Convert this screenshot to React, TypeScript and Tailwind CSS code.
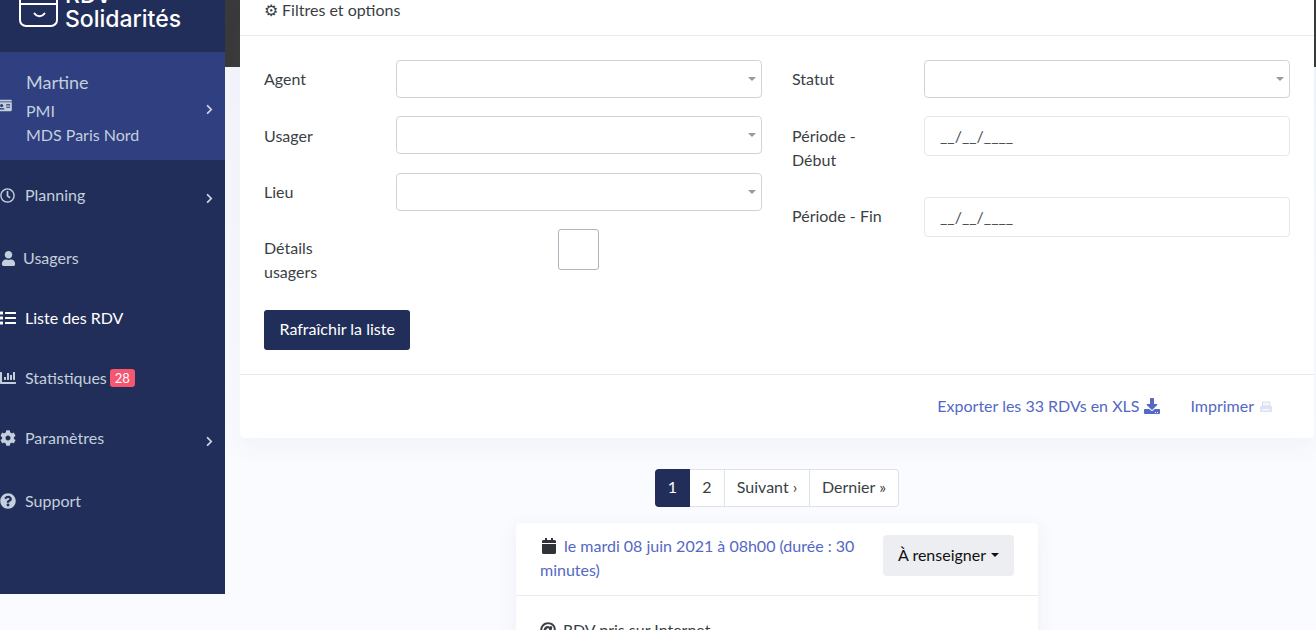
import { FaChartBar, FaChevronRight, FaCog, FaDownload, FaIdCard, FaList, FaQuestionCircle, FaRegClock, FaUser, FaCalendar, FaAt } from "react-icons/fa";
import type { ReactNode } from "react";

const lato = "font-['Lato','Liberation_Sans',sans-serif]";

function Chevron() {
  return <FaChevronRight className="h-[11px] w-[11px] translate-y-[3px] text-[#ced4e0]" aria-hidden="true" />;
}

function NavItem({ icon, label, active, chevron, badge, h, gap = "gap-[8px]" }: { icon: ReactNode; label: string; active?: boolean; chevron?: boolean; badge?: string; h: string; gap?: string }) {
  return (
    <div className={`flex items-center justify-between pr-[10px] ${h} ${active ? "text-white" : "text-[#c3d0dc]"}`}>
      <div className={`flex items-center ${gap} -ml-[2px] text-[16px]`}>
        <span className="flex w-[19px] justify-center">{icon}</span>
        <span>{label}</span>
        {badge && <span className="-ml-[5px] rounded-[3px] bg-[#f6566f] px-[5px] text-[13px] leading-[18px] text-white">{badge}</span>}
      </div>
      {chevron && <Chevron />}
    </div>
  );
}

function Sidebar() {
  return (
    <aside className="h-[594px] w-[225px] shrink-0 overflow-hidden bg-[#222e5a]">
      <div className="flex h-[52px] items-end pb-[25px] pl-[19px]">
        <div className="relative h-[28px] w-[39px] shrink-0 rounded-b-[7px] border-2 border-t-0 border-white">
          <div className="absolute left-0 right-0 top-[4px] h-[2px] bg-white" />
          <svg className="absolute left-[12px] top-[13px]" width="13" height="6" viewBox="0 0 13 6" fill="none" aria-hidden="true">
            <path d="M1.500 1.500 C4 5 9 5 11.500 1.500" stroke="white" strokeWidth="2" strokeLinecap="round" />
          </svg>
        </div>
        <div className="-mb-[4px] ml-[7px] font-['Inter','Lato',sans-serif] text-[23px] font-medium leading-[24px] text-white">
          <div className="-mt-[24px] h-[24px] pt-[4px] leading-[16px]">RDV</div>
          <div className="whitespace-nowrap">Solidarités</div>
        </div>
      </div>
      <div className="flex h-[108px] items-center justify-between bg-[#2f3f80] pr-[10px] text-[#c3d0dc]">
        <div className="-ml-[4px] flex h-full items-start gap-[13px]">
          <FaIdCard className="h-[13px] w-[17px] shrink-0 -translate-y-[1px] self-center" aria-hidden="true" />
          <div className="pt-[16px] text-[16px] leading-[24px]">
            <div className="mb-[3px] text-[18px] leading-[28px]">Martine</div>
            <div>PMI</div>
            <div>MDS Paris Nord</div>
          </div>
        </div>
        <Chevron />
      </div>
      <div className="pt-[5px]">
        <NavItem icon={<FaRegClock className="h-[15px] w-[15px]" />} label="Planning" chevron h="h-[60px]" />
        <NavItem icon={<FaUser className="h-[15px] w-[15px] translate-x-[1px]" />} label="Usagers" h="h-[66px]" gap="gap-[6px]" />
        <NavItem icon={<FaList className="h-[16px] w-[16px]" />} label="Liste des RDV" active h="h-[54px]" />
        <NavItem icon={<FaChartBar className="h-[16px] w-[16px]" />} label="Statistiques" badge="28" h="h-[66px]" />
        <NavItem icon={<FaCog className="h-[16px] w-[16px]" />} label="Paramètres" chevron h="h-[54px]" />
        <NavItem icon={<FaQuestionCircle className="h-[16px] w-[16px]" />} label="Support" h="h-[72px]" />
      </div>
    </aside>
  );
}

function SelectField({ label, mb = "mb-[19px]", labelPad = "pt-[7px]" }: { label: string; mb?: string; labelPad?: string }) {
  return (
    <div className={`flex items-start ${mb}`}>
      <label className={`w-[132px] shrink-0 ${labelPad} text-[16px] leading-[24px] text-[#3a3f45]`}>{label}</label>
      <div className="flex h-[38px] flex-1 items-center justify-end rounded-[4px] border border-[#ced4da] bg-white pr-[5px]">
        <span className="h-0 w-0 border-x-[4px] border-t-[4px] border-x-transparent border-t-[#999]" />
      </div>
    </div>
  );
}

function DateField({ label, mb, labelPad = "pt-[8px]" }: { label: ReactNode; mb: string; labelPad?: string }) {
  return (
    <div className={`flex items-start ${mb}`}>
      <label className={`w-[132px] shrink-0 ${labelPad} text-[16px] leading-[24px] text-[#3a3f45]`}>{label}</label>
      <div className="flex h-[40px] flex-1 items-center rounded-[4px] border border-[#e4e7eb] bg-white pl-[15px] text-[16px] text-[#495057]">__/__/____</div>
    </div>
  );
}

function Filters() {
  return (
    <section className="overflow-hidden rounded-b-[4px] bg-white shadow-[0_12px_24px_rgba(60,70,110,0.04)]">
      <div className="flex h-[36px] items-start border-b border-[#e9ecef] pl-[24px] text-[16px] leading-[20px] text-[#3a3f45]">⚙ Filtres et options</div>
      <div className="grid grid-cols-2 gap-x-[30px] px-[24px] pt-[24px]">
        <div>
          <SelectField label="Agent" mb="mb-[18px]" />
          <SelectField label="Usager" labelPad="pt-[8px]" />
          <SelectField label="Lieu" mb="mb-[18px]" />
          <div className="flex items-start">
            <label className="w-[132px] shrink-0 pt-[7px] text-[16px] leading-[24px] text-[#3a3f45]">Détails<br />usagers</label>
            <div className="ml-[162px] h-[41px] w-[41px] rounded-[3px] border border-[#adb5bd] bg-white" />
          </div>
        </div>
        <div>
          <SelectField label="Statut" mb="mb-[18px]" />
          <DateField label={<>Période -<br />Début</>} mb="mb-[41px]" />
          <div className="-mt-[16px]">
            <DateField label="Période - Fin" mb="mb-0" labelPad="pt-[7px]" />
          </div>
        </div>
      </div>
      <div className="px-[24px] pb-[24px] pt-[26px]">
        <button className="h-[40px] rounded-[3px] bg-[#222e5a] px-[15.500px] pb-[2px] text-[16px] text-white">Rafraîchir la liste</button>
      </div>
      <div className="flex h-[64px] items-center justify-end border-t border-[#e5eaf2] pr-[41px] text-[16px] text-[#5468c5]">
        <span className="-translate-y-[1px]">Exporter les 33 RDVs en XLS</span>
        <FaDownload className="ml-[5px] h-[16px] w-[16px] -translate-y-[1px]" aria-hidden="true" />
        <span className="ml-[30px] -translate-y-[1px]">Imprimer</span>
        <svg className="ml-[5px]" width="14" height="12" viewBox="0 0 14 12" aria-hidden="true">
          <path d="M3.500 1h7.500v4H3.500z" fill="#f3f5fb" stroke="#cfd5ee" strokeWidth="0.8" />
          <rect x="1" y="5" width="12" height="6" rx="1" fill="#dde1f2" />
          <rect x="3" y="8" width="8" height="1.500" fill="#f6f7fc" />
        </svg>
      </div>
    </section>
  );
}

function Pagination() {
  const cell = "flex h-[38px] items-center justify-center border border-l-0 border-[#dee2e6] bg-white pb-[2px] text-[16px] text-[#3a3f45]";
  return (
    <nav className="mt-[31px] flex justify-center">
      <span className="flex h-[38px] w-[35px] items-center justify-center rounded-l-[4px] bg-[#222e5a] pb-[2px] text-[16px] text-white">1</span>
      <span className={`${cell} w-[35px]`}>2</span>
      <span className={`${cell} w-[85px]`}>Suivant ›</span>
      <span className={`${cell} w-[89px] rounded-r-[4px]`}>Dernier »</span>
    </nav>
  );
}

function RdvCard() {
  return (
    <article className="mx-auto mt-[16px] w-[522px] rounded-[4px] bg-white pb-[20px] shadow-[0_4px_20px_rgba(60,70,110,0.06)]">
      <div className="flex h-[73px] items-start justify-between border-b border-[#e9ecef] pl-[24px] pr-[24px] pt-[11px]">
        <p className="w-[325px] text-[16px] leading-[24px] text-[#5468c5]">
          <FaCalendar className="mb-[3px] mr-[8px] ml-[2px] inline h-[16px] w-[14px] text-[#2f3237]" aria-hidden="true" />
          le mardi 08 juin 2021 à 08h00 (durée : 30 minutes)
        </p>
        <button className="mt-[1px] flex h-[41px] w-[131px] items-center justify-center rounded-[4px] bg-[#eceef2] pb-[2px] text-[16px] text-[#111]">
          À renseigner
          <span className="ml-[5px] h-0 w-0 border-x-[4px] border-t-[4px] border-x-transparent border-t-[#111]" />
        </button>
      </div>
      <p className="mt-[22px] flex items-center pl-[24px] text-[16px] leading-[24px] text-[#3a3f45]">
        <FaAt className="mr-[7px] h-[16px] w-[16px]" aria-hidden="true" />
        RDV pris sur Internet
      </p>
    </article>
  );
}

export default function App() {
  return (
    <div className={`relative flex h-[630px] w-[1316px] overflow-hidden bg-[#fafbff] ${lato}`}>
      <div className="absolute left-[225px] right-0 top-0 h-[67px] bg-[#3a3a3a]" />
      <Sidebar />
      <main className="relative flex-1">
        <div className="absolute inset-x-0 top-[67px] h-[400px] bg-gradient-to-b from-[#f3f5fb] to-[#fafbff]" />
        <div className="relative ml-[15px] mr-[2px]">
          <Filters />
          <Pagination />
          <RdvCard />
        </div>
      </main>
    </div>
  );
}
